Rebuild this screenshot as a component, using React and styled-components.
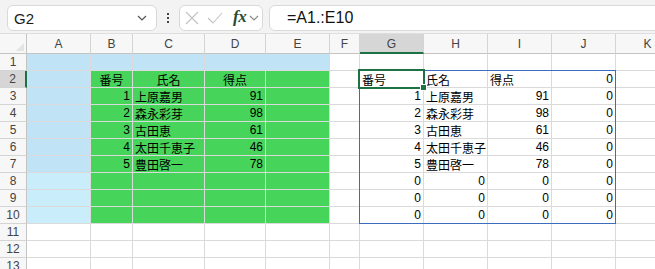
import React from 'react';
import styled, { createGlobalStyle } from 'styled-components';

const GlobalStyle = createGlobalStyle`
  html, body {
    margin: 0;
    padding: 0;
    background: #ffffff;
    overflow: hidden;
  }
  body {
    width: 655px;
    height: 269px;
    font-family: "Liberation Sans", "Noto Sans CJK JP", sans-serif;
  }
`;

const BLUE = '#c0e4f5';
const BLUE_LIGHT = '#caedfb';
const GREEN = '#47d45a';
const GRID = '#dadada';

const COLS = ['A', 'B', 'C', 'D', 'E', 'F', 'G', 'H', 'I', 'J', 'K'];
const WIDTHS = [64, 42, 72, 61, 64, 30, 64, 64, 64, 64, 64];

const people = [
  [1, '上原嘉男', 91],
  [2, '森永彩芽', 98],
  [3, '古田恵', 61],
  [4, '太田千恵子', 46],
  [5, '豊田啓一', 78]
];

const Page = styled.div`
  width: 655px;
  height: 269px;
  overflow: hidden;
`;

/* formula bar */

const FormulaBar = styled.div`
  height: 34px;
  box-sizing: border-box;
  display: flex;
  align-items: flex-start;
  padding: 5px 0 0 7px;
  background: #f3f3f3;
  border-bottom: 1px solid #dedede;
  overflow: hidden;
`;

const Box = styled.div`
  height: 26px;
  box-sizing: border-box;
  display: flex;
  align-items: center;
  background: #ffffff;
  border: 1px solid #d9d9d9;
  border-radius: 6px;
  flex-shrink: 0;
`;

const NameBox = styled(Box)`
  width: 150px;
  justify-content: space-between;
  padding: 0 9px 0 6px;
  font-size: 15px;
  color: #1a1a1a;
`;

const Dots = styled.div`
  width: 22px;
  height: 26px;
  flex-shrink: 0;
  display: flex;
  flex-direction: column;
  align-items: center;
  justify-content: center;
  gap: 2px;

  span {
    width: 2px;
    height: 2px;
    background: #444;
  }
`;

const FuncBox = styled(Box)`
  width: 84px;
  padding-left: 5px;
`;

const Fx = styled.span`
  font-family: "Liberation Serif", serif;
  font-style: italic;
  font-weight: bold;
  font-size: 17px;
  color: #2c4a30;
  margin: 0 3px 2px 10px;
  letter-spacing: -0.5px;
`;

const FormulaInput = styled(Box)`
  margin-left: 6px;
  width: 420px;
  padding-left: 17px;
  font-size: 16px;
  color: #111;
`;

/* sheet */

const Sheet = styled.div`
  display: grid;
  grid-template-columns: 27px ${WIDTHS.map(w => `${w}px`).join(' ')};
  grid-template-rows: 20px;
  grid-auto-rows: 17px;
  font-size: 12px;
`;

const Corner = styled.div`
  position: relative;
  background: #f7f7f7;
  border-right: 1px solid #c4c4c4;
  border-bottom: 1px solid #c4c4c4;

  &::after {
    content: '';
    position: absolute;
    right: 2px;
    bottom: 2px;
    border-style: solid;
    border-width: 0 0 8px 8px;
    border-color: transparent transparent #e4e4e4 transparent;
  }
`;

const ColHead = styled.div`
  box-sizing: border-box;
  display: flex;
  align-items: center;
  justify-content: center;
  padding-top: 1px;
  color: #444;
  background: ${({ $active }) => ($active ? '#d6d6d6' : '#f7f7f7')};
  border-right: 1px solid #d4d4d4;
  border-bottom: ${({ $active }) => ($active ? '2px solid #1e7145' : '1px solid #c4c4c4')};
`;

const RowHead = styled.div`
  box-sizing: border-box;
  display: flex;
  align-items: center;
  justify-content: center;
  color: #444;
  background: ${({ $active }) => ($active ? '#d6d6d6' : '#f7f7f7')};
  border-bottom: 1px solid #d4d4d4;
  border-right: ${({ $active }) => ($active ? '2px solid #1e7145' : '1px solid #c4c4c4')};
`;

const Cell = styled.div`
  box-sizing: border-box;
  position: ${({ $anchor }) => ($anchor ? 'relative' : 'static')};
  display: flex;
  align-items: center;
  justify-content: ${({ $align }) =>
    $align === 'right' ? 'flex-end' : $align === 'center' ? 'center' : 'flex-start'};
  padding: 0 2px 0 2px;
  white-space: nowrap;
  color: #000;
  background: ${({ $fill }) => $fill || '#ffffff'};
  border-right: 1px solid ${GRID};
  border-bottom: 1px solid ${GRID};
`;

const SpillOutline = styled.div`
  position: absolute;
  left: -1px;
  top: -1px;
  width: 257px;
  height: 154px;
  box-sizing: border-box;
  border: 1px solid #3a6cc0;
  pointer-events: none;
`;

const Selection = styled.div`
  position: absolute;
  left: -2px;
  top: -2px;
  width: 67px;
  height: 20px;
  box-sizing: border-box;
  border: 2px solid #1e7145;
  z-index: 2;
`;

const FillHandle = styled.div`
  position: absolute;
  right: -4px;
  bottom: -4px;
  width: 5px;
  height: 5px;
  background: #1e7145;
  border: 1px solid #ffffff;
`;

const Chevron = ({ color = '#555' }) => (
  <svg width="10" height="6" viewBox="0 0 10 6">
    <polyline points="1,1 5,5 9,1" fill="none" stroke={color} strokeWidth="1.2" />
  </svg>
);

const CancelIcon = () => (
  <svg width="22" height="14" viewBox="0 0 22 14">
    <path d="M1 1 L13 13 M13 1 L1 13" stroke="#c2c2c2" strokeWidth="1.1" fill="none" />
  </svg>
);

const EnterIcon = () => (
  <svg width="16" height="12" viewBox="0 0 16 12">
    <polyline points="1,6 6,11 15,1" fill="none" stroke="#c2c2c2" strokeWidth="1.1" />
  </svg>
);

const cellFor = (row, col) => {
  const c = { text: '', align: 'left', fill: null };

  if (row <= 10) {
    if (col === 'A') c.fill = row <= 7 ? BLUE : BLUE_LIGHT;
    if ('BCDE'.includes(col)) c.fill = row === 1 ? BLUE : GREEN;
  }

  const person = people[row - 3];

  if (row === 2) {
    if (col === 'B') Object.assign(c, { text: '番号', align: 'center' });
    if (col === 'C') Object.assign(c, { text: '氏名', align: 'center' });
    if (col === 'D') Object.assign(c, { text: '得点', align: 'center' });
    if (col === 'G') c.text = '番号';
    if (col === 'H') c.text = '氏名';
    if (col === 'I') c.text = '得点';
    if (col === 'J') Object.assign(c, { text: '0', align: 'right' });
  } else if (person) {
    const [no, name, score] = person;
    if (col === 'B' || col === 'G') Object.assign(c, { text: no, align: 'right' });
    if (col === 'C' || col === 'H') c.text = name;
    if (col === 'D' || col === 'I') Object.assign(c, { text: score, align: 'right' });
    if (col === 'J') Object.assign(c, { text: '0', align: 'right' });
  } else if (row >= 8 && row <= 10 && 'GHIJ'.includes(col)) {
    Object.assign(c, { text: '0', align: 'right' });
  }

  return c;
};

const App = () => {
  const rows = Array.from({ length: 13 }, (_, i) => i + 1);

  return (
    <Page>
      <GlobalStyle />
      <FormulaBar>
        <NameBox>
          <span>G2</span>
          <Chevron />
        </NameBox>
        <Dots>
          <span />
          <span />
          <span />
        </Dots>
        <FuncBox>
          <CancelIcon />
          <EnterIcon />
          <Fx>fx</Fx>
          <Chevron color="#8a8a8a" />
        </FuncBox>
        <FormulaInput>=A1.:E10</FormulaInput>
      </FormulaBar>

      <Sheet>
        <Corner />
        {COLS.map(col => (
          <ColHead key={col} $active={col === 'G'}>
            {col}
          </ColHead>
        ))}
        {rows.map(row => (
          <React.Fragment key={row}>
            <RowHead $active={row === 2}>{row}</RowHead>
            {COLS.map(col => {
              const c = cellFor(row, col);
              const anchor = row === 2 && col === 'G';
              return (
                <Cell key={col} $fill={c.fill} $align={c.align} $anchor={anchor}>
                  {c.text}
                  {anchor && (
                    <>
                      <SpillOutline />
                      <Selection>
                        <FillHandle />
                      </Selection>
                    </>
                  )}
                </Cell>
              );
            })}
          </React.Fragment>
        ))}
      </Sheet>
    </Page>
  );
};

export default App;
